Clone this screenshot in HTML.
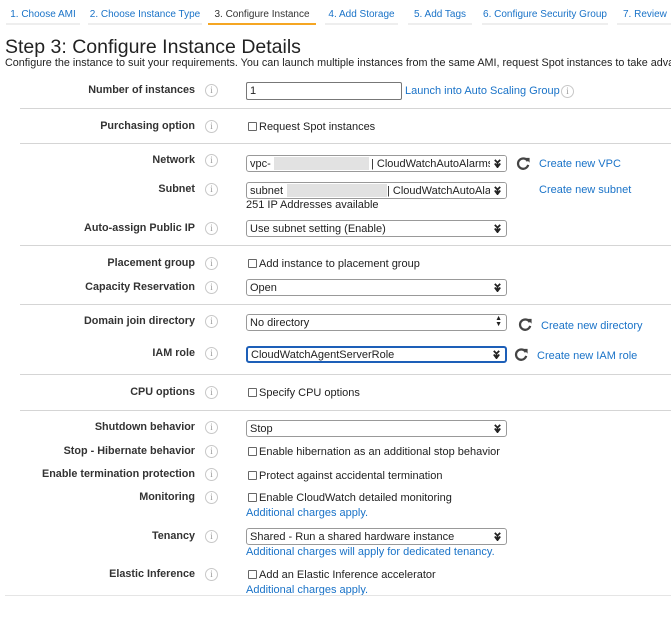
<!DOCTYPE html>
<html><head><meta charset="utf-8"><style>
*{margin:0;padding:0;box-sizing:border-box}
html,body{width:671px;height:629px;overflow:hidden}
body{background:#fff;font-family:"Liberation Sans",Arial,sans-serif;color:#222;position:relative}
div,span,svg{position:absolute;white-space:nowrap}
.tab{top:8px;height:17px;font-size:10px;color:#1a73c8;border-bottom:2px solid #eee;text-align:center;line-height:14px}
.tab.a{color:#333;border-bottom-color:#f5a623}
.l{right:476px;font-weight:bold;font-size:10.8px;line-height:14px;color:#333}
.i{left:205px;width:13px;height:13px;border:1px solid #c8c8c8;border-radius:50%;font-size:9px;line-height:11px;text-align:center;color:#999;font-family:"Liberation Serif",serif}
.t{font-size:11px;line-height:14px;color:#222}
.lk{font-size:11px;line-height:14px;color:#1a73c8}
.s{left:246px;width:261px;height:17px;border:1px solid #999;border-radius:3px;font-size:11px;line-height:16px;padding-left:3px;background:#fff;overflow:hidden}
.ar{right:4px;top:3px;width:9px;height:9px}
.cb{left:248px;width:9px;height:9px;border:1px solid #666;border-radius:1px}
.hr{left:20px;right:0;height:1px;background:#d5d5d5}
.r{width:15px;height:15px}
</style></head><body>
<svg width="0" height="0" style="position:absolute"><defs>
<symbol id="ar" viewBox="0 0 10 10"><path d="M2 1 L5 4 L8 1 M5 4 L5 9 M2 5 L5 9 L8 5" fill="none" stroke="#222" stroke-width="2"/></symbol>
<symbol id="rf" viewBox="0 0 16 16"><path d="M12.5 5.5 A5.5 5.5 0 1 0 13 9.5" fill="none" stroke="#444" stroke-width="2.4"/><path d="M9.5 2 L14.5 2 L14.5 7 Z" fill="#444"/></symbol>
</defs></svg>
<div class="tab" style="left:6px;width:74px">1. Choose AMI</div>
<div class="tab" style="left:88px;width:114px">2. Choose Instance Type</div>
<div class="tab a" style="left:208px;width:108px">3. Configure Instance</div>
<div class="tab" style="left:325px;width:73px">4. Add Storage</div>
<div class="tab" style="left:408px;width:64px">5. Add Tags</div>
<div class="tab" style="left:482px;width:126px">6. Configure Security Group</div>
<div class="tab" style="left:617px;width:54px;text-align:left;padding-left:6px;overflow:hidden">7. Review</div>

<div style="left:5px;top:36px;font-size:19.5px;color:#222;line-height:22px">Step 3: Configure Instance Details</div>
<div style="left:5px;top:57px;width:666px;overflow:hidden;font-size:10.8px;line-height:13px">Configure the instance to suit your requirements. You can launch multiple instances from the same AMI, request Spot instances to take advantage</div>

<div class="l" style="top:83px">Number of instances</div><div class="i" style="top:84px">i</div>
<div style="left:246px;top:82px;width:156px;height:18px;border:1px solid #777;border-radius:2px;font-size:11px;line-height:16px;padding-left:3px">1</div>
<div class="lk" style="left:405px;top:84px">Launch into Auto Scaling Group</div><div class="i" style="left:561px;top:85px">i</div>
<div class="hr" style="top:108px"></div>

<div class="l" style="top:119px">Purchasing option</div><div class="i" style="top:120px">i</div>
<div class="cb" style="top:122px"></div><div class="t" style="left:259px;top:120px">Request Spot instances</div>
<div class="hr" style="top:143px"></div>

<div class="l" style="top:153px">Network</div><div class="i" style="top:154px">i</div>
<div class="s" style="top:155px">vpc-<span style="left:27px;top:1px;width:95px;height:13px;background:#e2e2e2"></span><span style="left:124px;top:0">| CloudWatchAutoAlarmsD</span><span style="right:0;top:0;width:16px;height:15px;background:#fff"></span><svg class="ar"><use href="#ar"/></svg></div>
<svg class="r" style="left:516px;top:156px"><use href="#rf"/></svg><div class="lk" style="left:539px;top:157px">Create new VPC</div>

<div class="l" style="top:182px">Subnet</div><div class="i" style="top:183px">i</div>
<div class="s" style="top:182px">subnet<span style="left:40px;top:1px;width:100px;height:13px;background:#e2e2e2"></span><span style="left:140px;top:0">| CloudWatchAutoAlarr</span><span style="right:0;top:0;width:16px;height:15px;background:#fff"></span><svg class="ar"><use href="#ar"/></svg></div>
<div class="lk" style="left:539px;top:183px">Create new subnet</div>
<div class="t" style="left:246px;top:198px">251 IP Addresses available</div>

<div class="l" style="top:221px">Auto-assign Public IP</div><div class="i" style="top:222px">i</div>
<div class="s" style="top:220px">Use subnet setting (Enable)<svg class="ar"><use href="#ar"/></svg></div>
<div class="hr" style="top:245px"></div>

<div class="l" style="top:256px">Placement group</div><div class="i" style="top:257px">i</div>
<div class="cb" style="top:259px"></div><div class="t" style="left:259px;top:257px">Add instance to placement group</div>

<div class="l" style="top:280px">Capacity Reservation</div><div class="i" style="top:281px">i</div>
<div class="s" style="top:279px">Open<svg class="ar"><use href="#ar"/></svg></div>
<div class="hr" style="top:304px"></div>

<div class="l" style="top:314px">Domain join directory</div><div class="i" style="top:315px">i</div>
<div class="s" style="top:314px">No directory<span style="right:4px;top:1px;font-size:7px;line-height:6px">&#9650;<br>&#9660;</span></div>
<svg class="r" style="left:518px;top:317px"><use href="#rf"/></svg><div class="lk" style="left:541px;top:319px">Create new directory</div>

<div class="l" style="top:346px">IAM role</div><div class="i" style="top:347px">i</div>
<div class="s" style="top:346px;border:2px solid #1d5fb8;line-height:14px">CloudWatchAgentServerRole<svg class="ar" style="top:2px"><use href="#ar"/></svg></div>
<svg class="r" style="left:514px;top:347px"><use href="#rf"/></svg><div class="lk" style="left:537px;top:349px">Create new IAM role</div>
<div class="hr" style="top:374px"></div>

<div class="l" style="top:385px">CPU options</div><div class="i" style="top:386px">i</div>
<div class="cb" style="top:388px"></div><div class="t" style="left:259px;top:386px">Specify CPU options</div>
<div class="hr" style="top:410px"></div>

<div class="l" style="top:420px">Shutdown behavior</div><div class="i" style="top:421px">i</div>
<div class="s" style="top:420px">Stop<svg class="ar"><use href="#ar"/></svg></div>

<div class="l" style="top:444px">Stop - Hibernate behavior</div><div class="i" style="top:445px">i</div>
<div class="cb" style="top:447px"></div><div class="t" style="left:259px;top:445px">Enable hibernation as an additional stop behavior</div>

<div class="l" style="top:467px">Enable termination protection</div><div class="i" style="top:468px">i</div>
<div class="cb" style="top:471px"></div><div class="t" style="left:259px;top:469px">Protect against accidental termination</div>

<div class="l" style="top:490px">Monitoring</div><div class="i" style="top:491px">i</div>
<div class="cb" style="top:493px"></div><div class="t" style="left:259px;top:491px">Enable CloudWatch detailed monitoring</div>
<div class="lk" style="left:246px;top:506px">Additional charges apply.</div>

<div class="l" style="top:529px">Tenancy</div><div class="i" style="top:530px">i</div>
<div class="s" style="top:528px">Shared - Run a shared hardware instance<svg class="ar"><use href="#ar"/></svg></div>
<div class="lk" style="left:246px;top:545px">Additional charges will apply for dedicated tenancy.</div>

<div class="l" style="top:567px">Elastic Inference</div><div class="i" style="top:568px">i</div>
<div class="cb" style="top:570px"></div><div class="t" style="left:259px;top:568px">Add an Elastic Inference accelerator</div>
<div style="left:0;top:584px;width:671px;height:11px;overflow:hidden"><div class="lk" style="left:246px;top:-1px">Additional charges apply.</div></div>
<div class="hr" style="left:5px;top:595px;background:#e5e5e5"></div>
</body></html>
